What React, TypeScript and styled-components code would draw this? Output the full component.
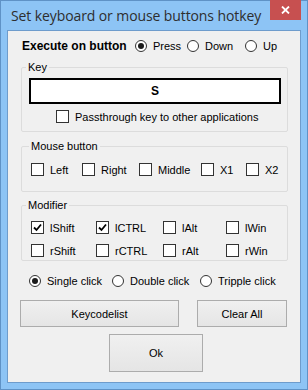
import React from "react";
import styled, { createGlobalStyle } from "styled-components";

const Global = createGlobalStyle`
  html, body { margin: 0; padding: 0; background: #8cc3f5; }
  * { box-sizing: border-box; }
`;

const Frame = styled.div`
  width: 308px;
  height: 390px;
  background: #8dc4f5;
  border: 1px solid #5f92c6;
  display: flex;
  flex-direction: column;
  padding: 0 6px 6px 6px;
  font-family: "Liberation Sans", Arial, sans-serif;
  font-size: 11px;
  color: #000;
`;

const TitleBar = styled.div`
  height: 29px;
  display: flex;
  align-items: flex-start;
  justify-content: space-between;
`;

const Title = styled.div`
  font-family: "Open Sans", "Noto Sans", sans-serif;
  font-size: 14px;
  color: #2e2e2e;
  margin-top: 4px;
  margin-left: 4px;
  line-height: 22px;
  letter-spacing: -0.1px;
  white-space: nowrap;
`;

const CloseBtn = styled.div`
  width: 31px;
  height: 20px;
  margin-top: -1px;
  background: #c75050;
  display: flex;
  align-items: center;
  justify-content: center;
`;

const Client = styled.div`
  flex: 1;
  border: 1px solid #6e9ccc;
  background: #f0f0f0;
  display: flex;
  flex-direction: column;
`;

const ExecRow = styled.div`
  margin-top: 8px;
  height: 14px;
  padding-left: 14px;
  display: flex;
  align-items: center;
`;

const Bold = styled.span`
  font-weight: bold;
  font-size: 12px;
  width: 113px;
  white-space: nowrap;
`;

const Item = styled.label<{ $w?: number }>`
  display: flex;
  align-items: center;
  gap: 6px;
  height: 13px;
  white-space: nowrap;
  ${(p) => (p.$w ? `width: ${p.$w}px;` : "")}
`;

const RadioCircle = styled.span<{ $on?: boolean }>`
  width: 12px;
  height: 12px;
  border-radius: 50%;
  border: 1px solid #333;
  background: #fff;
  display: flex;
  align-items: center;
  justify-content: center;
  flex: none;
  &::after {
    content: "";
    display: ${(p) => (p.$on ? "block" : "none")};
    width: 6px;
    height: 6px;
    border-radius: 50%;
    background: #1a1a1a;
  }
`;

const Box = styled.span`
  width: 13px;
  height: 13px;
  border: 1px solid #333;
  background: #fff;
  display: flex;
  align-items: center;
  justify-content: center;
  flex: none;
`;

const Group = styled.fieldset<{ $mt: number; $pt: number; $pb: number }>`
  margin: ${(p) => p.$mt}px 12px 0 13px;
  padding: ${(p) => p.$pt}px 0 ${(p) => p.$pb}px 0;
  border: 1px solid #dcdcdc;
  border-radius: 2px;
  min-width: 0;
`;

const Legend = styled.legend<{ $ml: number }>`
  margin-left: ${(p) => p.$ml}px;
  padding: 0 2px;
  line-height: 13px;
  height: 13px;
  font-size: 11px;
`;

const KeyBox = styled.div`
  margin: 0 6px 0 7px;
  height: 26px;
  border: 2px solid #000;
  background: #fff;
  display: flex;
  align-items: center;
  justify-content: center;
  font-weight: bold;
  font-size: 12px;
`;

const CenterRow = styled.div`
  margin-top: 6px;
  padding-left: 34px;
  display: flex;
`;

const CheckRow = styled.div`
  padding-left: 9px;
  display: flex;
`;

const ModGrid = styled.div`
  padding-left: 9px;
  display: grid;
  grid-template-columns: 65px 67px 63px auto;
  row-gap: 10px;
`;

const RadioRow = styled.div`
  margin-top: 13px;
  padding-left: 21px;
  display: flex;
`;

const ButtonRow = styled.div<{ $mt: number; $pl: number }>`
  margin-top: ${(p) => p.$mt}px;
  padding-left: ${(p) => p.$pl}px;
  display: flex;
  gap: 18px;
`;

const Button = styled.div<{ $w: number; $h: number }>`
  width: ${(p) => p.$w}px;
  height: ${(p) => p.$h}px;
  border: 1px solid #acacac;
  background: linear-gradient(#f0f0f0, #e5e5e5);
  display: flex;
  align-items: center;
  justify-content: center;
  font-size: 11px;
`;

const Check = () => (
  <svg width="9" height="9" viewBox="0 0 9 9">
    <path d="M1 4.5 L3.5 7 L8 1.5" fill="none" stroke="#000" strokeWidth="1.8" />
  </svg>
);

const CB = ({ label, on, w }: { label: string; on?: boolean; w?: number }) => (
  <Item $w={w}>
    <Box>{on && <Check />}</Box>
    {label}
  </Item>
);

const RB = ({ label, on, w }: { label: string; on?: boolean; w?: number }) => (
  <Item $w={w}>
    <RadioCircle $on={on} />
    {label}
  </Item>
);

export default function App() {
  return (
    <>
      <Global />
      <Frame>
        <TitleBar>
          <Title>Set keyboard or mouse buttons hotkey</Title>
          <CloseBtn>
            <svg width="9" height="8" viewBox="0 0 9 8">
              <path d="M1 0.5 L8 7.5 M8 0.5 L1 7.5" stroke="#fff" strokeWidth="1.8" />
            </svg>
          </CloseBtn>
        </TitleBar>
        <Client>
          <ExecRow>
            <Bold>Execute on button</Bold>
            <RB label="Press" on w={52} />
            <RB label="Down" w={58} />
            <RB label="Up" />
          </ExecRow>

          <Group $mt={8} $pt={4} $pb={8}>
            <Legend $ml={4}>Key</Legend>
            <KeyBox>S</KeyBox>
            <CenterRow>
              <CB label="Passthrough key to other applications" />
            </CenterRow>
          </Group>

          <Group $mt={8} $pt={10} $pb={15}>
            <Legend $ml={7}>Mouse button</Legend>
            <CheckRow>
              <CB label="Left" w={51} />
              <CB label="Right" w={57} />
              <CB label="Middle" w={62} />
              <CB label="X1" w={45} />
              <CB label="X2" />
            </CheckRow>
          </Group>

          <Group $mt={7} $pt={9} $pb={3}>
            <Legend $ml={4}>Modifier</Legend>
            <ModGrid>
              <CB label="lShift" on />
              <CB label="lCTRL" on />
              <CB label="lAlt" />
              <CB label="lWin" />
              <CB label="rShift" />
              <CB label="rCTRL" />
              <CB label="rAlt" />
              <CB label="rWin" />
            </ModGrid>
          </Group>

          <RadioRow>
            <RB label="Single click" on w={83} />
            <RB label="Double click" w={88} />
            <RB label="Tripple click" />
          </RadioRow>

          <ButtonRow $mt={13} $pl={12}>
            <Button $w={159} $h={27}>Keycodelist</Button>
            <Button $w={90} $h={27}>Clear All</Button>
          </ButtonRow>
          <ButtonRow $mt={7} $pl={101}>
            <Button $w={94} $h={38}>Ok</Button>
          </ButtonRow>
        </Client>
      </Frame>
    </>
  );
}
